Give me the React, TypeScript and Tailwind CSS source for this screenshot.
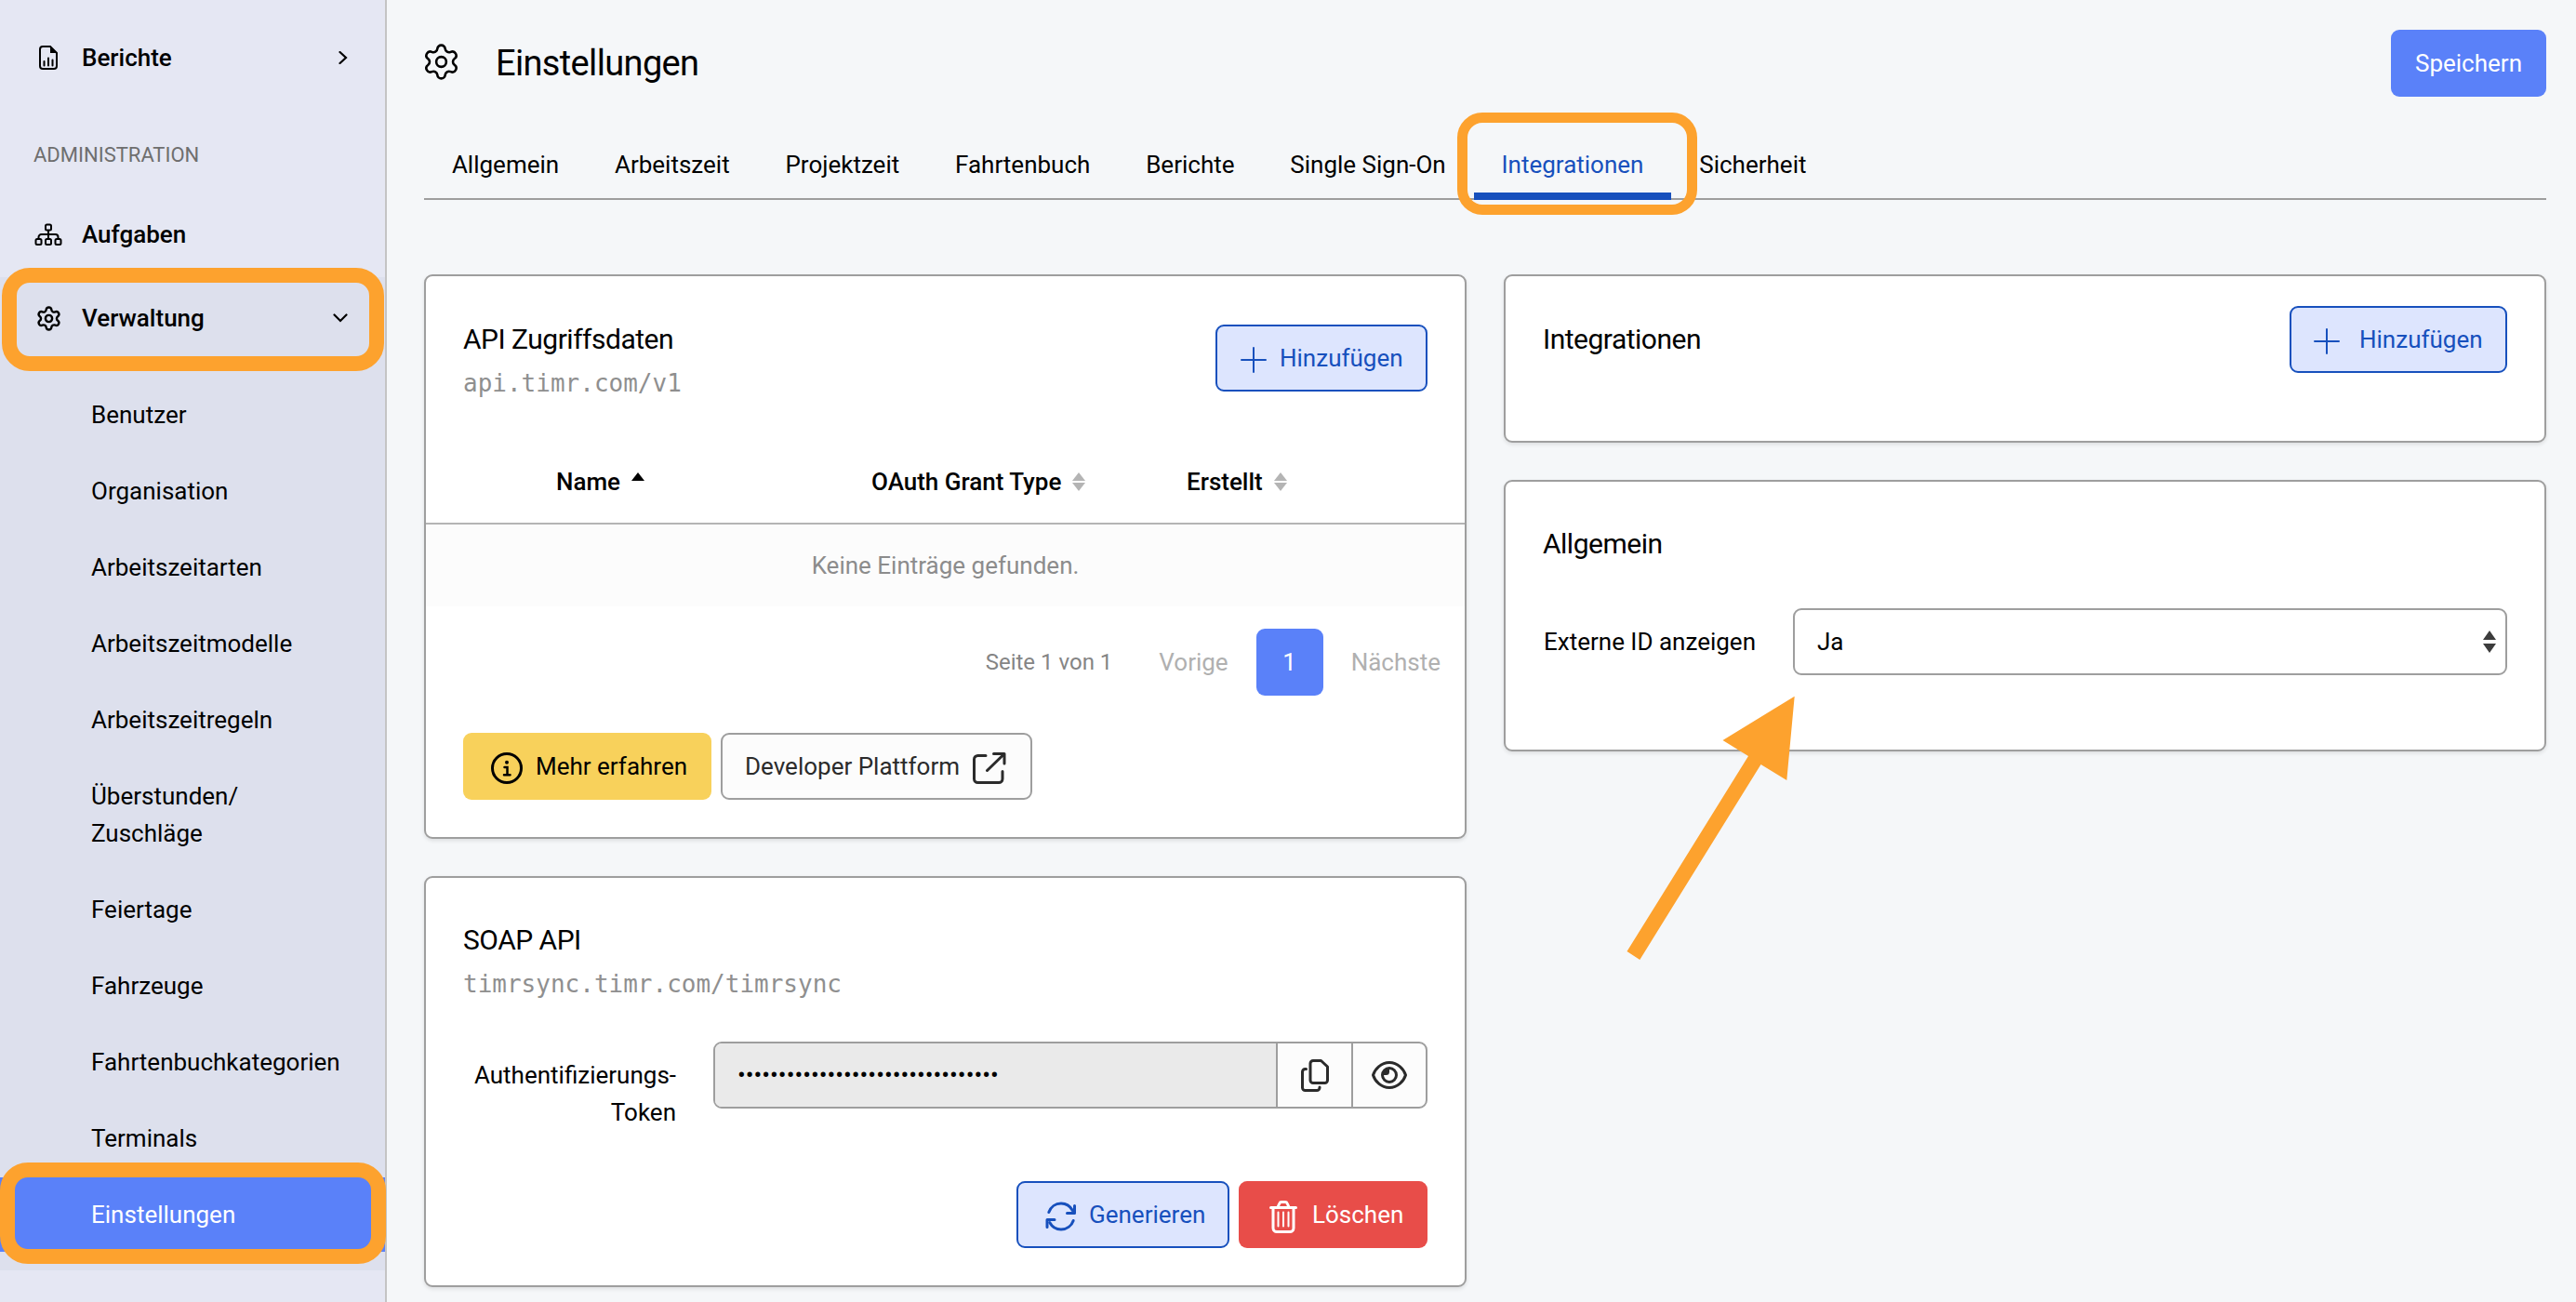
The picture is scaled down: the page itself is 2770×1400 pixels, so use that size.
import { ReactNode } from "react";
import { Settings } from "lucide-react";

const subItems = [
  "Benutzer",
  "Organisation",
  "Arbeitszeitarten",
  "Arbeitszeitmodelle",
  "Arbeitszeitregeln",
  "Überstunden/ Zuschläge",
  "Feiertage",
  "Fahrzeuge",
  "Fahrtenbuchkategorien",
  "Terminals",
  "Einstellungen",
];

const tabs = [
  "Allgemein",
  "Arbeitszeit",
  "Projektzeit",
  "Fahrtenbuch",
  "Berichte",
  "Single Sign-On",
  "Integrationen",
  "Sicherheit",
];

function ReportIcon() {
  return (
    <svg width="20" height="26" viewBox="0 0 20 26" fill="none" stroke="currentColor" strokeWidth="2">
      <path d="M12 1H4a3 3 0 0 0-3 3v18a3 3 0 0 0 3 3h12a3 3 0 0 0 3-3V8z" />
      <path d="M12 1v7h7z" fill="currentColor" stroke="none" />
      <path d="M5.500 17v4.500M10 13.500v8M14.500 15.500v6" strokeLinecap="round" />
    </svg>
  );
}

function TreeIcon() {
  return (
    <svg width="30" height="24" viewBox="0 0 30 24" fill="none" stroke="currentColor" strokeWidth="2">
      <rect x="12" y="1.500" width="6" height="6" rx="1.500" />
      <rect x="1.500" y="17" width="6" height="6" rx="1.500" />
      <rect x="12" y="17" width="6" height="6" rx="1.500" />
      <rect x="22.500" y="17" width="6" height="6" rx="1.500" />
      <path d="M15 7.500V17M4.500 17v-2a3 3 0 0 1 3-3h15a3 3 0 0 1 3 3v2" />
    </svg>
  );
}

function PlusIcon() {
  return (
    <svg width="28" height="28" viewBox="0 0 28 28" stroke="currentColor" strokeWidth="2" strokeLinecap="round">
      <path d="M14 1v26M1 14h26" />
    </svg>
  );
}

function InfoIcon() {
  return (
    <svg width="34" height="34" viewBox="0 0 34 34" fill="none" stroke="currentColor">
      <circle cx="17" cy="17" r="15.500" strokeWidth="3" />
      <circle cx="17" cy="10.700" r="2" fill="currentColor" stroke="none" />
      <path d="M14.500 16h3v8M14 24.300h6.500" strokeWidth="2.500" strokeLinecap="round" />
    </svg>
  );
}

function ExternalIcon() {
  return (
    <svg width="36" height="34" viewBox="0 0 36 34" fill="none" stroke="currentColor" strokeWidth="3" strokeLinecap="round" strokeLinejoin="round">
      <path d="M14 3.500H5.500a4 4 0 0 0-4 4V28.500a4 4 0 0 0 4 4H28a4 4 0 0 0 4-4V20.500" />
      <path d="M22.500 1.500H34V12M33.500 2L15.500 19.500" />
    </svg>
  );
}

function CopyIcon() {
  return (
    <svg width="30" height="35" viewBox="0 0 30 35" fill="none" stroke="currentColor" strokeWidth="3" strokeLinecap="round" strokeLinejoin="round">
      <path d="M13 1.500h8.500L28.500 8v14.500a3 3 0 0 1-3 3H13a3 3 0 0 1-3-3v-18a3 3 0 0 1 3-3z" />
      <path d="M5.500 10.500h-1a3 3 0 0 0-3 3V30.500a3 3 0 0 0 3 3H17a3 3 0 0 0 3-3V30" />
    </svg>
  );
}

function EyeIcon() {
  return (
    <svg width="38" height="30" viewBox="0 0 38 30" fill="none" stroke="currentColor" strokeWidth="3">
      <path d="M1.500 15C3.500 8.500 10 1.500 19 1.500S34.500 8.500 36.500 15C34.500 21.500 28 28.500 19 28.500S3.500 21.500 1.500 15z" strokeLinejoin="round" />
      <circle cx="19" cy="15" r="7.500" />
      <path d="M19 8v3.500a3.500 3.500 0 0 1-3.500 3.500H12a7 7 0 0 1 7-7z" fill="currentColor" stroke="none" />
    </svg>
  );
}

function RefreshIcon() {
  return (
    <svg width="34" height="32" viewBox="0 0 34 32" fill="none" stroke="currentColor" strokeWidth="3" strokeLinecap="round" strokeLinejoin="round">
      <path d="M3.800 11.500C5.800 5.800 11 2 17 2c5 0 9.500 2.500 12.300 7.500" />
      <path d="M31.500 4.500v8H23.500" />
      <path d="M30.200 20.500C28.200 26.200 23 30 17 30c-5 0-9.500-2.500-12.300-7.500" />
      <path d="M2 27.500v-8h8" />
    </svg>
  );
}

function TrashIcon() {
  return (
    <svg width="30" height="35" viewBox="0 0 30 35" fill="none" stroke="currentColor" strokeWidth="3" strokeLinecap="round" strokeLinejoin="round">
      <path d="M1.500 7.500h27M9 7l1.800-4a2.400 2.400 0 0 1 2.200-1.500h4a2.400 2.400 0 0 1 2.200 1.500L21 7" />
      <path d="M4 8v21.500a4 4 0 0 0 4 4h14a4 4 0 0 0 4-4V8" />
      <path d="M9.500 12.500v15M15 12.500v15M20.500 12.500v15" strokeWidth="2" />
    </svg>
  );
}

function SortIcon({ active }: { active?: boolean }) {
  return (
    <svg width="14" height="20" viewBox="0 0 14 20" fill={active ? "#000" : "#b4b4b4"}>
      <path d="M7 0l7 9H0z" />
      {!active && <path d="M7 20l7-9H0z" />}
    </svg>
  );
}

function Card({ className, children }: { className: string; children: ReactNode }) {
  return (
    <section className={`rounded-[9px] border-2 border-[#9e9e9e] bg-white shadow-[0_2px_4px_rgba(0,0,0,0.1)] ${className}`}>
      {children}
    </section>
  );
}

function CardTitle({ children }: { children: ReactNode }) {
  return <h2 className="text-[30px] leading-[54px] tracking-[-0.5px]">{children}</h2>;
}

function Sidebar() {
  return (
    <aside className="relative w-[416px] shrink-0 border-r-2 border-[#c4c4c4] bg-[#e5e7f3] pt-[18px]">
      <div className="flex h-[88px] items-center pl-9 pr-10 font-medium">
        <div className="mr-5 flex w-8 justify-center"><ReportIcon /></div>
        Berichte
        <svg className="ml-auto" width="10" height="14" viewBox="0 0 10 14" fill="none" stroke="#000" strokeWidth="2.2" strokeLinecap="round">
          <path d="M1.500 1l6.500 6-6.500 6" />
        </svg>
      </div>
      <div className="h-[102px] pl-9 pt-11 text-[22px] leading-[34px] text-[#6e6e6e]">ADMINISTRATION</div>
      <div className="flex h-[88px] items-center pl-9 font-medium">
        <div className="mr-5 flex w-8 justify-center"><TreeIcon /></div>
        Aufgaben
      </div>
      <div className="mt-[2px] bg-[#dde0ed] pb-5">
        <div className="mb-5 flex h-[88px] items-center pl-9 pr-10 font-medium">
          <div className="mr-5 flex w-8 justify-center"><Settings size={29} strokeWidth={2} /></div>
          Verwaltung
          <svg className="ml-auto" width="16" height="10" viewBox="0 0 16 10" fill="none" stroke="#000" strokeWidth="2.2" strokeLinecap="round">
            <path d="M1.500 1.500L8 8l6.500-6.500" />
          </svg>
        </div>
        <ul className="flex flex-col gap-[2px]">
          {subItems.map((item) => (
            <li key={item} className={item === "Einstellungen" ? "bg-[#5a81f9] py-5 pl-[98px] text-white" : "py-5 pl-[98px]"}>
              <span className={item.startsWith("Über") ? "block w-44" : ""}>{item}</span>
            </li>
          ))}
        </ul>
      </div>
      <div className="absolute left-[2px] top-[288px] h-[111px] w-[411px] rounded-[30px] border-[16px] border-[#fda22e]" />
      <div className="absolute left-0 top-[1250px] h-[109px] w-[415px] rounded-[30px] border-[16px] border-[#fda22e]" />
    </aside>
  );
}

function ApiCard() {
  return (
    <Card className="h-[607px]">
      <div className="flex justify-between px-10 pt-[41px]">
        <div>
          <CardTitle>API Zugriffsdaten</CardTitle>
          <p className="font-['DejaVu_Sans_Mono',monospace] text-[#8f8f8f]">api.timr.com/v1</p>
        </div>
        <button className="mt-[11px] flex h-[72px] w-[228px] items-center rounded-[9px] border-2 border-[#1750bd] bg-[#dde5fe] pl-[25px] text-[#1750bd]">
          <span className="mr-3.5 mt-[3px]"><PlusIcon /></span>
          Hinzufügen
        </button>
      </div>
      <div className="mt-[63px] flex h-[69px] border-b-2 border-[#b4b4b4] pl-[140px] pt-[3px] font-medium">
        <div className="flex w-[339px] gap-3">Name <span className="pt-2.5"><SortIcon active /></span></div>
        <div className="flex w-[339px] gap-3">OAuth Grant Type <span className="pt-2.5"><SortIcon /></span></div>
        <div className="flex gap-3">Erstellt <span className="pt-2.5"><SortIcon /></span></div>
      </div>
      <div className="bg-[#fcfcfc] py-6 text-center text-[#8c8c8c]">Keine Einträge gefunden.</div>
      <div className="mt-6 flex h-[72px] items-center justify-end pr-[26px] text-[#b0b0b0]">
        <span className="mr-[50px] text-2xl text-[#858585]">Seite 1 von 1</span>
        <span>Vorige</span>
        <span className="mx-[30px] flex h-[72px] w-[72px] items-center justify-center rounded-[9px] bg-[#5a81f9] text-white">1</span>
        <span>Nächste</span>
      </div>
      <div className="mt-10 flex gap-2.5 pl-10">
        <button className="flex h-[72px] w-[267px] items-center rounded-[9px] bg-[#f8d15b] pl-[30px]">
          <span className="mr-3.5 mt-1"><InfoIcon /></span>
          Mehr erfahren
        </button>
        <button className="flex h-[72px] w-[335px] items-center rounded-[9px] border-2 border-[#9e9e9e] bg-[#fcfcfc] pl-6 text-[#2b2b2b]">
          Developer Plattform
          <span className="ml-3.5 mt-1"><ExternalIcon /></span>
        </button>
      </div>
    </Card>
  );
}

function SoapCard() {
  return (
    <Card className="h-[442px] px-10 pt-10">
      <CardTitle>SOAP API</CardTitle>
      <p className="font-['DejaVu_Sans_Mono',monospace] text-[#8f8f8f]">timrsync.timr.com/timrsync</p>
      <div className="mt-[42px] flex">
        <label className="mr-10 w-[229px] pt-4 text-right">Authentifizierungs- Token</label>
        <div className="flex h-[72px] w-[768px] overflow-hidden rounded-[9px] border-2 border-[#9e9e9e] bg-[#fcfcfc] text-[#2b2b2b]">
          <div className="flex grow items-center bg-[#eaeaea] pl-6 text-black">
            {"•".repeat(32)}
          </div>
          <div className="flex w-[81px] items-center justify-center border-l-2 border-[#9e9e9e]"><CopyIcon /></div>
          <div className="flex w-[80px] items-center justify-center border-l-2 border-[#9e9e9e]"><EyeIcon /></div>
        </div>
      </div>
      <div className="mt-[54px] flex justify-end gap-2.5">
        <button className="flex h-[72px] w-[229px] items-center rounded-[9px] border-2 border-[#1750bd] bg-[#dde5fe] pl-[29px] text-[#1750bd]">
          <span className="mr-[13px] mt-1"><RefreshIcon /></span>
          Generieren
        </button>
        <button className="flex h-[72px] w-[203px] items-center rounded-[9px] bg-[#e84d49] pl-[33px] text-white">
          <span className="mr-4 mt-1"><TrashIcon /></span>
          Löschen
        </button>
      </div>
    </Card>
  );
}

export default function App() {
  return (
    <div className="relative flex h-screen w-full overflow-hidden bg-[#f5f7f9] font-[Roboto,sans-serif] text-[26px] leading-[40px] text-black">
      <Sidebar />
      <main className="grow pl-10 pr-8 pt-8">
        <header className="flex h-[72px] items-center">
          <span className="-ml-[3px] mb-[3px]"><Settings size={43} strokeWidth={1.45} /></span>
          <h1 className="ml-[37px] grow text-[38px] tracking-[-0.65px]">Einstellungen</h1>
          <button className="h-[72px] w-[167px] rounded-[9px] bg-[#5a81f9] text-white">Speichern</button>
        </header>
        <nav className="relative mt-[41px] flex h-[70px] border-b-2 border-[#9e9e9e]">
          {tabs.map((tab) => (
            <a key={tab} className={tab === "Integrationen" ? "h-[70px] border-b-8 border-[#1750bd] px-[29.9px] pt-3 text-[#1750bd]" : "px-[29.9px] pt-3"}>
              {tab}
            </a>
          ))}
          <div className="absolute -top-6 left-[1111px] h-[110px] w-[258px] rounded-[27px] border-[11px] border-[#fda22e]" />
        </nav>
        <div className="mt-20 grid grid-cols-2 gap-10">
          <div className="flex flex-col gap-10">
            <ApiCard />
            <SoapCard />
          </div>
          <div className="flex flex-col gap-10">
            <Card className="flex h-[181px] justify-between px-10 pt-8">
              <div className="pt-[9px]"><CardTitle>Integrationen</CardTitle></div>
              <button className="flex h-[72px] w-[234px] items-center rounded-[9px] border-2 border-[#1750bd] bg-[#dde5fe] pl-6 text-[#1750bd]">
                <span className="mr-[21px] mt-[3px]"><PlusIcon /></span>
                Hinzufügen
              </button>
            </Card>
            <Card className="h-[292px] px-10 pt-10">
              <CardTitle>Allgemein</CardTitle>
              <div className="mt-[42px] flex items-center">
                <label className="w-[269px] pl-px">Externe ID anzeigen</label>
                <div className="flex h-[72px] grow items-center justify-between rounded-[9px] border-2 border-[#9e9e9e] pl-6 pr-[10px]">
                  Ja
                  <svg width="14" height="24" viewBox="0 0 14 24" fill="#3c3c3c">
                    <path d="M7 0l7 10H0zM7 24l7-10H0z" />
                  </svg>
                </div>
              </div>
            </Card>
          </div>
        </div>
      </main>
      {/* arrow pointing at the select */}
      <svg className="absolute left-[1740px] top-[740px]" width="200" height="300" viewBox="1740 740 200 300">
        <path d="M1929.700 748.700L1852.500 796l27.500 17-130.500 210 13.800 9L1893.500 822l27.800 17z" fill="#fda22e" />
      </svg>
    </div>
  );
}
